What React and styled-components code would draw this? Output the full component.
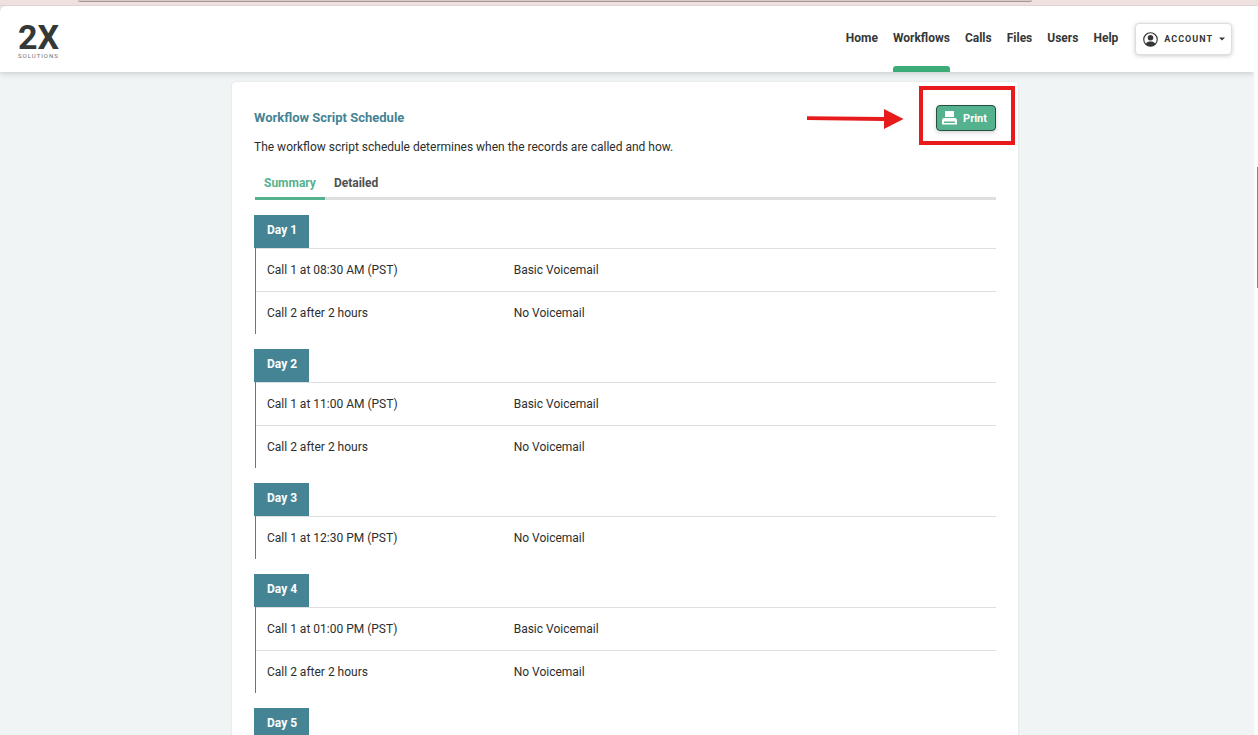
import React, { useState } from 'react';
import styled, { createGlobalStyle } from 'styled-components';

const GlobalStyle = createGlobalStyle`
  :root {
    --green: #3dab75;
    --mint: #54b28f;
    --teal: #458495;
    --ink: #343837;
    --line: #dde0df;
    --page: #f0f4f5;
    --font: Roboto, 'Open Sans', sans-serif;
  }

  * {
    box-sizing: border-box;
  }

  body {
    margin: 0;
    background: var(--page);
    color: #2b2e2d;
    font-family: var(--font);
    font-size: 12px;
    font-weight: 400;
    line-height: 16px;
  }
`;

const StyledWindow = styled.div`
  display: flex;
  flex-direction: column;
  height: 100vh;
  overflow: hidden;
  background: #f0e1e1;
`;

const StyledStrip = styled.div`
  display: flex;
  flex: none;
  height: 6px;
  padding: 0 18% 0 78px;
  border-bottom: 1px solid #e3d2d3;
`;

const StyledAddress = styled.div`
  flex: 1;
  height: 2px;
  background: #dccbcb;
  border-bottom: 1px solid #a39797;
  border-radius: 0 0 6px 6px;
`;

const StyledViewport = styled.div`
  display: flex;
  flex: 1;
  min-height: 0;
  overflow: hidden;
  background: var(--page);
  border-radius: 6px 0 0 0;
`;

const StyledPage = styled.div`
  flex: 1;
  min-width: 0;
  overflow: hidden;
`;

const StyledScrollbar = styled.div`
  display: flex;
  flex: none;
  justify-content: flex-end;
  width: 4px;
  padding-top: 161px;
  background: #fcfcfc;
`;

const StyledThumb = styled.div`
  width: 1px;
  height: 121px;
  background: #858585;
`;

const StyledHeader = styled.header`
  position: relative;
  display: flex;
  align-items: center;
  justify-content: space-between;
  height: 66px;
  padding: 0 22px 0 18px;
  background: #fff;
  box-shadow: 0 1px 6px rgba(52, 56, 55, 0.24);
`;

const StyledLogo = styled.a`
  display: flex;
  flex-direction: column;
  padding-top: 2px;
  color: var(--ink);
  font-family: Roboto, sans-serif;
  font-size: 34px;
  font-weight: 700;
  line-height: 32px;
  text-decoration: none;

  small {
    color: #6d706f;
    font-size: 6px;
    font-weight: 400;
    line-height: 6px;
    letter-spacing: 1px;
  }
`;

const StyledNav = styled.nav`
  display: flex;
  align-items: center;
  gap: 15px;
  height: 100%;
`;

const StyledNavLink = styled.a`
  display: grid;
  grid-template-rows: 1fr 6px;
  align-items: center;
  height: 100%;
  padding-top: 4px;
  color: var(--ink);
  font-weight: 700;
  text-decoration: none;

  &::after {
    content: '';
    height: 6px;
    border-radius: 3px 3px 0 0;
    background: ${({ $active }) => ($active ? 'var(--green)' : 'none')};
  }
`;

const StyledAccount = styled.button`
  display: flex;
  align-items: center;
  gap: 6px;
  height: 32px;
  margin-left: 2px;
  padding: 0 6px 0 7px;
  border: 1px solid #dedede;
  border-radius: 4px;
  background: #fff;
  box-shadow: 0 1px 4px rgba(0, 0, 0, 0.2);
  color: var(--ink);
  font-family: Roboto, sans-serif;
  font-size: 9px;
  font-weight: 700;
  letter-spacing: 1px;
`;

const StyledCard = styled.main`
  max-width: 786px;
  margin: 10px auto 0;
  padding: 23px 22px;
  border-radius: 4px;
  background: #fff;
  box-shadow: 0 0 2px rgba(52, 56, 55, 0.16);
`;

const StyledContent = styled.div`
  padding-right: 4px;
`;

const StyledCardHeader = styled.div`
  display: flex;
  align-items: center;
  justify-content: space-between;
`;

const StyledTitle = styled.h1`
  margin: 0;
  color: var(--teal);
  font-size: 13px;
  font-weight: 700;
`;

const StyledDescription = styled.p`
  margin: 8px 0 20px;
`;

const StyledPrintArea = styled.div`
  position: relative;
`;

const StyledPrint = styled.button`
  display: flex;
  align-items: center;
  gap: 6px;
  height: 26px;
  padding: 0 8px 0 5px;
  border: 1px solid #254f40;
  border-radius: 4px;
  background: var(--mint);
  box-shadow: 0 2px 4px rgba(0, 0, 0, 0.16);
  color: #fff;
  font-family: var(--font);
  font-size: 11px;
  font-weight: 700;
`;

const StyledHighlight = styled.div`
  position: absolute;
  inset: -19px -19px -14px -17px;
  border: 4px solid #e71b1b;
  pointer-events: none;
`;

const StyledArrow = styled.svg`
  position: absolute;
  top: 4px;
  right: 92px;
  pointer-events: none;
`;

const StyledTabs = styled.div`
  display: flex;
  margin-left: 1px;
  box-shadow: inset 0 -3px var(--line);
`;

const StyledTab = styled.button`
  padding: 0 9px 6px;
  border: 0;
  border-bottom: 3px solid ${({ $active }) => ($active ? 'var(--mint)' : 'transparent')};
  background: none;
  color: ${({ $active }) => ($active ? 'var(--mint)' : '#4d5150')};
  font-family: var(--font);
  font-size: 12px;
  font-weight: 700;
  line-height: 16px;
`;

const StyledDay = styled.section`
  margin-top: 15px;
`;

const StyledDayTitle = styled.h2`
  width: fit-content;
  margin: 0;
  padding: 7px 12px 10px 13px;
  background: var(--teal);
  color: #fff;
  font-size: 12px;
  font-weight: 700;
  line-height: 16px;
`;

const StyledTableWrap = styled.div`
  margin-left: 1px;
  border-left: 1px solid var(--teal);
`;

const StyledTable = styled.table`
  width: 100%;
  border-spacing: 0;
  table-layout: fixed;

  td {
    height: 43px;
    padding: 0 11px;
    border-top: 1px solid var(--line);
  }
`;

const days = [
  {
    title: 'Day 1',
    calls: [
      ['Call 1 at 08:30 AM (PST)', 'Basic Voicemail'],
      ['Call 2 after 2 hours', 'No Voicemail'],
    ],
  },
  {
    title: 'Day 2',
    calls: [
      ['Call 1 at 11:00 AM (PST)', 'Basic Voicemail'],
      ['Call 2 after 2 hours', 'No Voicemail'],
    ],
  },
  { title: 'Day 3', calls: [['Call 1 at 12:30 PM (PST)', 'No Voicemail']] },
  {
    title: 'Day 4',
    calls: [
      ['Call 1 at 01:00 PM (PST)', 'Basic Voicemail'],
      ['Call 2 after 2 hours', 'No Voicemail'],
    ],
  },
  { title: 'Day 5', calls: [] },
];

const links = ['Home', 'Workflows', 'Calls', 'Files', 'Users', 'Help'];

const IconUser = () => (
  <svg width="15" height="15" viewBox="0 0 14 14" aria-hidden="true">
    <circle cx="7" cy="7" r="6.3" fill="none" stroke="currentColor" strokeWidth="1.1" />
    <circle cx="7" cy="5.3" r="2.6" fill="currentColor" />
    <path d="M2.4 11.2C3.6 9.2 5 8.8 7 8.8s3.4.4 4.6 2.4A6.2 6.2 0 0 1 2.4 11.2Z" fill="currentColor" />
  </svg>
);

const IconCaret = () => (
  <svg width="6" height="4" viewBox="0 0 6 4" aria-hidden="true">
    <path d="M0 .5h6L3 3.5Z" fill="currentColor" />
  </svg>
);

const IconPrinter = () => (
  <svg width="15" height="14" viewBox="0 0 15 14" aria-hidden="true">
    <path d="M3 0h9v6H3Z" fill="#fff" />
    <path d="M1.5 7h12L15 8.5v5H0v-5Z" fill="#fff" />
    <path d="M2 10.5h11V12H2Z" fill="#54b28f" />
  </svg>
);

const Header = () => (
  <StyledHeader>
    <StyledLogo href="#home">
      2X
      <small>SOLUTIONS</small>
    </StyledLogo>
    <StyledNav>
      {links.map(link => (
        <StyledNavLink key={link} href={`#${link.toLowerCase()}`} $active={link === 'Workflows'}>
          {link}
        </StyledNavLink>
      ))}
      <StyledAccount type="button">
        <IconUser />
        ACCOUNT
        <IconCaret />
      </StyledAccount>
    </StyledNav>
  </StyledHeader>
);

const Day = ({ title, calls }) => (
  <StyledDay>
    <StyledDayTitle>{title}</StyledDayTitle>
    <StyledTableWrap>
      <StyledTable>
        <tbody>
          {calls.map(([time, voicemail]) => (
            <tr key={time}>
              <td>{time}</td>
              <td>{voicemail}</td>
              <td />
            </tr>
          ))}
        </tbody>
      </StyledTable>
    </StyledTableWrap>
  </StyledDay>
);

const App = () => {
  const [tab, setTab] = useState('Summary');

  return (
    <StyledWindow>
      <GlobalStyle />
      <StyledStrip>
        <StyledAddress />
      </StyledStrip>
      <StyledViewport>
        <StyledPage>
          <Header />
          <StyledContent>
            <StyledCard>
              <StyledCardHeader>
                <StyledTitle>Workflow Script Schedule</StyledTitle>
                <StyledPrintArea>
                  <StyledPrint type="button">
                    <IconPrinter />
                    Print
                  </StyledPrint>
                  <StyledHighlight />
                  <StyledArrow width="97" height="20" viewBox="0 0 97 20" aria-hidden="true">
                    <path d="M0 7.2 77 8V0l19.5 10L77 20v-8L0 11Z" fill="#e71b1b" />
                  </StyledArrow>
                </StyledPrintArea>
              </StyledCardHeader>
              <StyledDescription>
                The workflow script schedule determines when the records are called and how.
              </StyledDescription>
              <StyledTabs role="tablist">
                {['Summary', 'Detailed'].map(name => (
                  <StyledTab
                    key={name}
                    type="button"
                    role="tab"
                    aria-selected={tab === name}
                    $active={tab === name}
                    onClick={() => setTab(name)}>
                    {name}
                  </StyledTab>
                ))}
              </StyledTabs>
              {days.map(day => (
                <Day key={day.title} {...day} />
              ))}
            </StyledCard>
          </StyledContent>
        </StyledPage>
        <StyledScrollbar>
          <StyledThumb />
        </StyledScrollbar>
      </StyledViewport>
    </StyledWindow>
  );
};

export default App;
